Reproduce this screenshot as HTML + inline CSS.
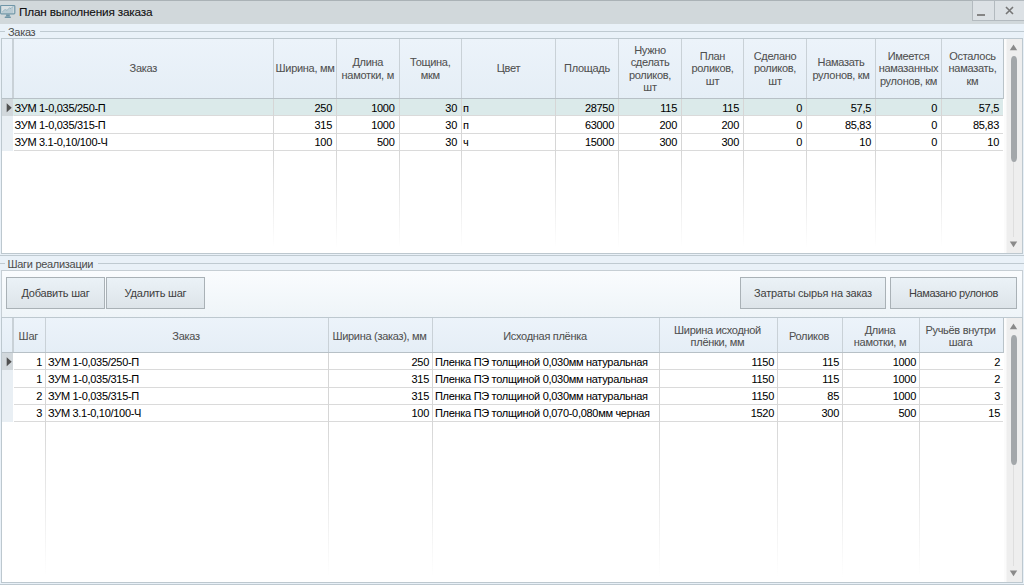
<!DOCTYPE html>
<html><head><meta charset="utf-8"><style>
html,body{margin:0;padding:0}
body{width:1024px;height:585px;overflow:hidden;position:relative;background:#e9f1f8;font-family:"Liberation Sans",sans-serif;font-size:11px}
body div,body svg{position:absolute}
.t{white-space:nowrap;letter-spacing:-0.3px}
.h{display:flex;align-items:center;justify-content:center;text-align:center;color:#505050;letter-spacing:-0.3px;white-space:nowrap;-webkit-text-stroke:0.06px #505050}
.h span{display:block}
.d{box-sizing:border-box;white-space:nowrap;overflow:hidden;color:#000000;letter-spacing:-0.3px;-webkit-text-stroke:0.05px #000000}
.btn{box-sizing:border-box;border:1px solid #a9b1b6;background:linear-gradient(#ebf2f7,#dde4e9);color:#404040;text-align:center;letter-spacing:-0.2px}
</style></head><body>

<div style="left:0px;top:0px;width:1024px;height:24px;background:#d1d8db;border-top:1px solid #aab2b6;box-sizing:border-box"></div>
<svg style="position:absolute;left:0;top:0" width="18" height="20" viewBox="0 0 18 20">
<rect x="0.6" y="5.5" width="14.2" height="8.4" rx="0.8" fill="#d9e0e3" stroke="#7096a8" stroke-width="1.2"/>
<path d="M2.2 12.6 L5 10.2 L7 11 L9.5 8.6 L11 9.2 L13.3 6.6 L13.3 12.9 L2.2 12.9 Z" fill="#b9cbd4"/>
<path d="M2.2 12 L5 9.6 L7 10.4 L9.5 8 L11 8.6 L13.3 6.2" fill="none" stroke="#8aabba" stroke-width="0.9"/>
<rect x="6.1" y="14.4" width="3.7" height="2.2" fill="#7096a8"/>
<rect x="4.7" y="16.4" width="6.2" height="1.5" rx="0.5" fill="#7096a8"/>
</svg>
<div class="t" style="left:19px;top:2px;width:200px;height:20px;line-height:20px;text-align:left;font-size:11.8px;letter-spacing:-0.2px;color:#111;-webkit-text-stroke:0.1px #111">План выполнения заказа</div>
<div style="left:972px;top:0px;width:23px;height:21px;box-sizing:border-box;border:1px solid #b3babf;background:#dce1e5"></div>
<div style="left:994px;top:0px;width:31px;height:21px;box-sizing:border-box;border:1px solid #b3babf;background:#dce1e5"></div>
<div style="left:977px;top:14px;width:8px;height:2px;background:#858585"></div>
<svg style="position:absolute;left:1005px;top:6px" width="9" height="9"><path d="M1 1 L8 8 M8 1 L1 8" stroke="#767676" stroke-width="1.6"/></svg>
<div style="left:0px;top:31px;width:5px;height:1px;background:#bfcad1"></div>
<div style="left:40px;top:31px;width:984px;height:1px;background:#bfcad1"></div>
<div class="t" style="left:8px;top:25px;width:40px;height:15px;line-height:15px;text-align:left;color:#4b4b4b">Заказ</div>
<div style="left:1px;top:38px;width:1022px;height:216px;box-sizing:border-box;border:1px solid #bdc8cf;background:#fff"></div>
<div style="left:2px;top:39px;width:1001px;height:59px;background:linear-gradient(#ecf3fa,#e5eef6)"></div>
<div style="left:2px;top:98px;width:1001px;height:1px;background:#b7c0c6"></div>
<div style="left:12.0px;top:39px;width:2px;height:59px;background:#c9d1d7"></div>
<div style="left:273px;top:39px;width:1px;height:59px;background:#c9d1d7"></div>
<div style="left:336px;top:39px;width:1px;height:59px;background:#c9d1d7"></div>
<div style="left:398.5px;top:39px;width:1px;height:59px;background:#c9d1d7"></div>
<div style="left:461px;top:39px;width:1px;height:59px;background:#c9d1d7"></div>
<div style="left:555px;top:39px;width:1px;height:59px;background:#c9d1d7"></div>
<div style="left:618px;top:39px;width:1px;height:59px;background:#c9d1d7"></div>
<div style="left:681px;top:39px;width:1px;height:59px;background:#c9d1d7"></div>
<div style="left:743px;top:39px;width:1px;height:59px;background:#c9d1d7"></div>
<div style="left:806px;top:39px;width:1px;height:59px;background:#c9d1d7"></div>
<div style="left:875px;top:39px;width:1px;height:59px;background:#c9d1d7"></div>
<div style="left:941px;top:39px;width:1px;height:59px;background:#c9d1d7"></div>
<div class="h" style="left:13.5px;top:39px;width:259.5px;height:59px;"><span style="line-height:12.3px">Заказ</span></div>
<div class="h" style="left:274px;top:39px;width:62px;height:59px;"><span style="line-height:12.3px">Ширина, мм</span></div>
<div class="h" style="left:337px;top:39px;width:61.5px;height:59px;"><span style="line-height:12.3px">Длина<br>намотки, м</span></div>
<div class="h" style="left:399.5px;top:39px;width:61.5px;height:59px;"><span style="line-height:12.3px">Тощина,<br>мкм</span></div>
<div class="h" style="left:462px;top:39px;width:93px;height:59px;"><span style="line-height:12.3px">Цвет</span></div>
<div class="h" style="left:556px;top:39px;width:62px;height:59px;"><span style="line-height:12.3px">Площадь</span></div>
<div class="h" style="left:619px;top:39px;width:62px;height:59px;"><span style="line-height:12.3px">Нужно<br>сделать<br>роликов,<br>шт</span></div>
<div class="h" style="left:682px;top:39px;width:61px;height:59px;"><span style="line-height:12.3px">План<br>роликов,<br>шт</span></div>
<div class="h" style="left:744px;top:39px;width:62px;height:59px;"><span style="line-height:12.3px">Сделано<br>роликов,<br>шт</span></div>
<div class="h" style="left:807px;top:39px;width:68px;height:59px;"><span style="line-height:12.3px">Намазать<br>рулонов, км</span></div>
<div class="h" style="left:876px;top:39px;width:65px;height:59px;"><span style="line-height:12.3px">Имеется<br>намазанных<br>рулонов, км</span></div>
<div class="h" style="left:942px;top:39px;width:61px;height:59px;"><span style="line-height:12.3px">Осталось<br>намазать,<br>км</span></div>
<div style="left:2px;top:99.0px;width:11px;height:17.3px;background:#d2d8dc"></div>
<div style="left:13px;top:99.0px;width:990px;height:17.3px;background:#dbeaea"></div>
<div style="left:13.5px;top:115.3px;width:989.5px;height:1px;background:#dadada"></div>
<div class="d" style="left:13.5px;top:99.5px;width:259.5px;height:16.3px;line-height:16.3px;text-align:left;padding-left:1px">ЗУМ 1-0,035/250-П</div>
<div class="d" style="left:274px;top:99.5px;width:62px;height:16.3px;line-height:16.3px;text-align:right;padding-right:4px">250</div>
<div class="d" style="left:337px;top:99.5px;width:61.5px;height:16.3px;line-height:16.3px;text-align:right;padding-right:4px">1000</div>
<div class="d" style="left:399.5px;top:99.5px;width:61.5px;height:16.3px;line-height:16.3px;text-align:right;padding-right:4px">30</div>
<div class="d" style="left:462px;top:99.5px;width:93px;height:16.3px;line-height:16.3px;text-align:left;padding-left:1px">п</div>
<div class="d" style="left:556px;top:99.5px;width:62px;height:16.3px;line-height:16.3px;text-align:right;padding-right:4px">28750</div>
<div class="d" style="left:619px;top:99.5px;width:62px;height:16.3px;line-height:16.3px;text-align:right;padding-right:4px">115</div>
<div class="d" style="left:682px;top:99.5px;width:61px;height:16.3px;line-height:16.3px;text-align:right;padding-right:4px">115</div>
<div class="d" style="left:744px;top:99.5px;width:62px;height:16.3px;line-height:16.3px;text-align:right;padding-right:4px">0</div>
<div class="d" style="left:807px;top:99.5px;width:68px;height:16.3px;line-height:16.3px;text-align:right;padding-right:4px">57,5</div>
<div class="d" style="left:876px;top:99.5px;width:65px;height:16.3px;line-height:16.3px;text-align:right;padding-right:4px">0</div>
<div class="d" style="left:942px;top:99.5px;width:61px;height:16.3px;line-height:16.3px;text-align:right;padding-right:4px">57,5</div>
<div style="left:2px;top:116.3px;width:11px;height:17.3px;background:#e9eff4"></div>
<div style="left:13.5px;top:132.6px;width:989.5px;height:1px;background:#dadada"></div>
<div class="d" style="left:13.5px;top:116.8px;width:259.5px;height:16.3px;line-height:16.3px;text-align:left;padding-left:1px">ЗУМ 1-0,035/315-П</div>
<div class="d" style="left:274px;top:116.8px;width:62px;height:16.3px;line-height:16.3px;text-align:right;padding-right:4px">315</div>
<div class="d" style="left:337px;top:116.8px;width:61.5px;height:16.3px;line-height:16.3px;text-align:right;padding-right:4px">1000</div>
<div class="d" style="left:399.5px;top:116.8px;width:61.5px;height:16.3px;line-height:16.3px;text-align:right;padding-right:4px">30</div>
<div class="d" style="left:462px;top:116.8px;width:93px;height:16.3px;line-height:16.3px;text-align:left;padding-left:1px">п</div>
<div class="d" style="left:556px;top:116.8px;width:62px;height:16.3px;line-height:16.3px;text-align:right;padding-right:4px">63000</div>
<div class="d" style="left:619px;top:116.8px;width:62px;height:16.3px;line-height:16.3px;text-align:right;padding-right:4px">200</div>
<div class="d" style="left:682px;top:116.8px;width:61px;height:16.3px;line-height:16.3px;text-align:right;padding-right:4px">200</div>
<div class="d" style="left:744px;top:116.8px;width:62px;height:16.3px;line-height:16.3px;text-align:right;padding-right:4px">0</div>
<div class="d" style="left:807px;top:116.8px;width:68px;height:16.3px;line-height:16.3px;text-align:right;padding-right:4px">85,83</div>
<div class="d" style="left:876px;top:116.8px;width:65px;height:16.3px;line-height:16.3px;text-align:right;padding-right:4px">0</div>
<div class="d" style="left:942px;top:116.8px;width:61px;height:16.3px;line-height:16.3px;text-align:right;padding-right:4px">85,83</div>
<div style="left:2px;top:133.6px;width:11px;height:17.3px;background:#e9eff4"></div>
<div style="left:13.5px;top:149.9px;width:989.5px;height:1px;background:#dadada"></div>
<div class="d" style="left:13.5px;top:134.1px;width:259.5px;height:16.3px;line-height:16.3px;text-align:left;padding-left:1px">ЗУМ 3.1-0,10/100-Ч</div>
<div class="d" style="left:274px;top:134.1px;width:62px;height:16.3px;line-height:16.3px;text-align:right;padding-right:4px">100</div>
<div class="d" style="left:337px;top:134.1px;width:61.5px;height:16.3px;line-height:16.3px;text-align:right;padding-right:4px">500</div>
<div class="d" style="left:399.5px;top:134.1px;width:61.5px;height:16.3px;line-height:16.3px;text-align:right;padding-right:4px">30</div>
<div class="d" style="left:462px;top:134.1px;width:93px;height:16.3px;line-height:16.3px;text-align:left;padding-left:1px">ч</div>
<div class="d" style="left:556px;top:134.1px;width:62px;height:16.3px;line-height:16.3px;text-align:right;padding-right:4px">15000</div>
<div class="d" style="left:619px;top:134.1px;width:62px;height:16.3px;line-height:16.3px;text-align:right;padding-right:4px">300</div>
<div class="d" style="left:682px;top:134.1px;width:61px;height:16.3px;line-height:16.3px;text-align:right;padding-right:4px">300</div>
<div class="d" style="left:744px;top:134.1px;width:62px;height:16.3px;line-height:16.3px;text-align:right;padding-right:4px">0</div>
<div class="d" style="left:807px;top:134.1px;width:68px;height:16.3px;line-height:16.3px;text-align:right;padding-right:4px">10</div>
<div class="d" style="left:876px;top:134.1px;width:65px;height:16.3px;line-height:16.3px;text-align:right;padding-right:4px">0</div>
<div class="d" style="left:942px;top:134.1px;width:61px;height:16.3px;line-height:16.3px;text-align:right;padding-right:4px">10</div>
<div style="left:273px;top:99px;width:1px;height:51.900000000000006px;background:#d6d6d6"></div>
<div style="left:273px;top:150.9px;width:1px;height:97.1px;background:linear-gradient(#d6d6d6,rgba(214,214,214,0))"></div>
<div style="left:336px;top:99px;width:1px;height:51.900000000000006px;background:#d6d6d6"></div>
<div style="left:336px;top:150.9px;width:1px;height:97.1px;background:linear-gradient(#d6d6d6,rgba(214,214,214,0))"></div>
<div style="left:398.5px;top:99px;width:1px;height:51.900000000000006px;background:#d6d6d6"></div>
<div style="left:398.5px;top:150.9px;width:1px;height:97.1px;background:linear-gradient(#d6d6d6,rgba(214,214,214,0))"></div>
<div style="left:461px;top:99px;width:1px;height:51.900000000000006px;background:#d6d6d6"></div>
<div style="left:461px;top:150.9px;width:1px;height:97.1px;background:linear-gradient(#d6d6d6,rgba(214,214,214,0))"></div>
<div style="left:555px;top:99px;width:1px;height:51.900000000000006px;background:#d6d6d6"></div>
<div style="left:555px;top:150.9px;width:1px;height:97.1px;background:linear-gradient(#d6d6d6,rgba(214,214,214,0))"></div>
<div style="left:618px;top:99px;width:1px;height:51.900000000000006px;background:#d6d6d6"></div>
<div style="left:618px;top:150.9px;width:1px;height:97.1px;background:linear-gradient(#d6d6d6,rgba(214,214,214,0))"></div>
<div style="left:681px;top:99px;width:1px;height:51.900000000000006px;background:#d6d6d6"></div>
<div style="left:681px;top:150.9px;width:1px;height:97.1px;background:linear-gradient(#d6d6d6,rgba(214,214,214,0))"></div>
<div style="left:743px;top:99px;width:1px;height:51.900000000000006px;background:#d6d6d6"></div>
<div style="left:743px;top:150.9px;width:1px;height:97.1px;background:linear-gradient(#d6d6d6,rgba(214,214,214,0))"></div>
<div style="left:806px;top:99px;width:1px;height:51.900000000000006px;background:#d6d6d6"></div>
<div style="left:806px;top:150.9px;width:1px;height:97.1px;background:linear-gradient(#d6d6d6,rgba(214,214,214,0))"></div>
<div style="left:875px;top:99px;width:1px;height:51.900000000000006px;background:#d6d6d6"></div>
<div style="left:875px;top:150.9px;width:1px;height:97.1px;background:linear-gradient(#d6d6d6,rgba(214,214,214,0))"></div>
<div style="left:941px;top:99px;width:1px;height:51.900000000000006px;background:#d6d6d6"></div>
<div style="left:941px;top:150.9px;width:1px;height:97.1px;background:linear-gradient(#d6d6d6,rgba(214,214,214,0))"></div>
<svg style="position:absolute;left:5.5px;top:103.15px" width="7" height="10"><path d="M0.7 0.3 L5.7 4.8 L0.7 9.3 Z" fill="#505050"/></svg>
<div style="left:1004px;top:39px;width:18px;height:214px;background:linear-gradient(90deg,#fbfbfb 0,#fbfbfb 2px,#eeeeee 3px)"></div>
<div style="left:1003px;top:39px;width:1px;height:60px;background:#b9c3c9"></div>
<svg style="position:absolute;left:1009px;top:44px" width="10" height="7"><path d="M0.8 6.3 L4.5 0.5 L8.2 6.3 Z" fill="#8a8a8a"/></svg>
<div style="left:1010.5px;top:56px;width:6.4px;height:106.30000000000001px;background:#a3a7aa;border-radius:3.2px/5px"></div>
<div style="left:1013.4px;top:162.3px;width:1px;height:74.69999999999999px;background:#dedede"></div>
<svg style="position:absolute;left:1009px;top:241px" width="10" height="7"><path d="M0.8 0.5 L4.5 6.3 L8.2 0.5 Z" fill="#8a8a8a"/></svg>
<div style="left:0px;top:255px;width:1024px;height:1px;background:#bfcad1"></div>
<div style="left:0px;top:263px;width:5px;height:1px;background:#bfcad1"></div>
<div style="left:98px;top:263px;width:926px;height:1px;background:#bfcad1"></div>
<div class="t" style="left:7.5px;top:257px;width:100px;height:15px;line-height:15px;text-align:left;color:#4b4b4b">Шаги реализации</div>
<div style="left:1px;top:270px;width:1022px;height:48px;box-sizing:border-box;border:1px solid #c6ced4;border-bottom:none;background:linear-gradient(#fafcfe,#eef4f8)"></div>
<div class="btn" style="left:6px;top:277px;width:99px;height:32px;line-height:31px;letter-spacing:-0.2px">Добавить шаг</div>
<div class="btn" style="left:106px;top:277px;width:99px;height:32px;line-height:31px;letter-spacing:-0.2px">Удалить шаг</div>
<div class="btn" style="left:740px;top:277px;width:146px;height:32px;line-height:31px;letter-spacing:-0.2px">Затраты сырья на заказ</div>
<div class="btn" style="left:890px;top:277px;width:127px;height:32px;line-height:31px;letter-spacing:-0.45px">Намазано рулонов</div>
<div style="left:1px;top:317px;width:1022px;height:266px;box-sizing:border-box;border:1px solid #bdc8cf;background:#fff"></div>
<div style="left:2px;top:318px;width:1001px;height:34px;background:linear-gradient(#ecf3fa,#e5eef6)"></div>
<div style="left:2px;top:352px;width:1001px;height:1px;background:#b7c0c6"></div>
<div style="left:12.0px;top:318px;width:2px;height:34px;background:#c9d1d7"></div>
<div style="left:45px;top:318px;width:1px;height:34px;background:#c9d1d7"></div>
<div style="left:328px;top:318px;width:1px;height:34px;background:#c9d1d7"></div>
<div style="left:432px;top:318px;width:1px;height:34px;background:#c9d1d7"></div>
<div style="left:659px;top:318px;width:1px;height:34px;background:#c9d1d7"></div>
<div style="left:777px;top:318px;width:1px;height:34px;background:#c9d1d7"></div>
<div style="left:842px;top:318px;width:1px;height:34px;background:#c9d1d7"></div>
<div style="left:919px;top:318px;width:1px;height:34px;background:#c9d1d7"></div>
<div class="h" style="left:12.5px;top:319px;width:31.5px;height:34px;"><span style="line-height:12.3px">Шаг</span></div>
<div class="h" style="left:45px;top:319px;width:282px;height:34px;"><span style="line-height:12.3px">Заказ</span></div>
<div class="h" style="left:328px;top:319px;width:103px;height:34px;"><span style="line-height:12.3px">Ширина (заказ), мм</span></div>
<div class="h" style="left:432px;top:319px;width:226px;height:34px;"><span style="line-height:12.3px">Исходная плёнка</span></div>
<div class="h" style="left:659px;top:319px;width:117px;height:34px;"><span style="line-height:12.3px">Ширина исходной<br>плёнки, мм</span></div>
<div class="h" style="left:777px;top:319px;width:64px;height:34px;"><span style="line-height:12.3px">Роликов</span></div>
<div class="h" style="left:842px;top:319px;width:76px;height:34px;"><span style="line-height:12.3px">Длина<br>намотки, м</span></div>
<div class="h" style="left:919px;top:319px;width:83px;height:34px;"><span style="line-height:12.3px">Ручьёв внутри<br>шага</span></div>
<div style="left:2px;top:353.0px;width:11px;height:17.3px;background:#d2d8dc"></div>
<div style="left:13.5px;top:369.3px;width:989.5px;height:1px;background:#dadada"></div>
<div class="d" style="left:13.5px;top:353.5px;width:31.5px;height:16.3px;line-height:16.3px;text-align:right;padding-right:3px">1</div>
<div class="d" style="left:46px;top:353.5px;width:282px;height:16.3px;line-height:16.3px;text-align:left;padding-left:2px">ЗУМ 1-0,035/250-П</div>
<div class="d" style="left:329px;top:353.5px;width:103px;height:16.3px;line-height:16.3px;text-align:right;padding-right:3px">250</div>
<div class="d" style="left:433px;top:353.5px;width:226px;height:16.3px;line-height:16.3px;text-align:left;padding-left:2px">Пленка ПЭ толщиной 0,030мм натуральная</div>
<div class="d" style="left:660px;top:353.5px;width:117px;height:16.3px;line-height:16.3px;text-align:right;padding-right:3px">1150</div>
<div class="d" style="left:778px;top:353.5px;width:64px;height:16.3px;line-height:16.3px;text-align:right;padding-right:3px">115</div>
<div class="d" style="left:843px;top:353.5px;width:76px;height:16.3px;line-height:16.3px;text-align:right;padding-right:3px">1000</div>
<div class="d" style="left:920px;top:353.5px;width:83px;height:16.3px;line-height:16.3px;text-align:right;padding-right:3px">2</div>
<div style="left:2px;top:370.3px;width:11px;height:17.3px;background:#e9eff4"></div>
<div style="left:13.5px;top:386.6px;width:989.5px;height:1px;background:#dadada"></div>
<div class="d" style="left:13.5px;top:370.8px;width:31.5px;height:16.3px;line-height:16.3px;text-align:right;padding-right:3px">1</div>
<div class="d" style="left:46px;top:370.8px;width:282px;height:16.3px;line-height:16.3px;text-align:left;padding-left:2px">ЗУМ 1-0,035/315-П</div>
<div class="d" style="left:329px;top:370.8px;width:103px;height:16.3px;line-height:16.3px;text-align:right;padding-right:3px">315</div>
<div class="d" style="left:433px;top:370.8px;width:226px;height:16.3px;line-height:16.3px;text-align:left;padding-left:2px">Пленка ПЭ толщиной 0,030мм натуральная</div>
<div class="d" style="left:660px;top:370.8px;width:117px;height:16.3px;line-height:16.3px;text-align:right;padding-right:3px">1150</div>
<div class="d" style="left:778px;top:370.8px;width:64px;height:16.3px;line-height:16.3px;text-align:right;padding-right:3px">115</div>
<div class="d" style="left:843px;top:370.8px;width:76px;height:16.3px;line-height:16.3px;text-align:right;padding-right:3px">1000</div>
<div class="d" style="left:920px;top:370.8px;width:83px;height:16.3px;line-height:16.3px;text-align:right;padding-right:3px">2</div>
<div style="left:2px;top:387.6px;width:11px;height:17.3px;background:#e9eff4"></div>
<div style="left:13.5px;top:403.9px;width:989.5px;height:1px;background:#dadada"></div>
<div class="d" style="left:13.5px;top:388.1px;width:31.5px;height:16.3px;line-height:16.3px;text-align:right;padding-right:3px">2</div>
<div class="d" style="left:46px;top:388.1px;width:282px;height:16.3px;line-height:16.3px;text-align:left;padding-left:2px">ЗУМ 1-0,035/315-П</div>
<div class="d" style="left:329px;top:388.1px;width:103px;height:16.3px;line-height:16.3px;text-align:right;padding-right:3px">315</div>
<div class="d" style="left:433px;top:388.1px;width:226px;height:16.3px;line-height:16.3px;text-align:left;padding-left:2px">Пленка ПЭ толщиной 0,030мм натуральная</div>
<div class="d" style="left:660px;top:388.1px;width:117px;height:16.3px;line-height:16.3px;text-align:right;padding-right:3px">1150</div>
<div class="d" style="left:778px;top:388.1px;width:64px;height:16.3px;line-height:16.3px;text-align:right;padding-right:3px">85</div>
<div class="d" style="left:843px;top:388.1px;width:76px;height:16.3px;line-height:16.3px;text-align:right;padding-right:3px">1000</div>
<div class="d" style="left:920px;top:388.1px;width:83px;height:16.3px;line-height:16.3px;text-align:right;padding-right:3px">3</div>
<div style="left:2px;top:404.9px;width:11px;height:17.3px;background:#e9eff4"></div>
<div style="left:13.5px;top:421.2px;width:989.5px;height:1px;background:#dadada"></div>
<div class="d" style="left:13.5px;top:405.4px;width:31.5px;height:16.3px;line-height:16.3px;text-align:right;padding-right:3px">3</div>
<div class="d" style="left:46px;top:405.4px;width:282px;height:16.3px;line-height:16.3px;text-align:left;padding-left:2px">ЗУМ 3.1-0,10/100-Ч</div>
<div class="d" style="left:329px;top:405.4px;width:103px;height:16.3px;line-height:16.3px;text-align:right;padding-right:3px">100</div>
<div class="d" style="left:433px;top:405.4px;width:226px;height:16.3px;line-height:16.3px;text-align:left;padding-left:2px">Пленка ПЭ толщиной 0,070-0,080мм черная</div>
<div class="d" style="left:660px;top:405.4px;width:117px;height:16.3px;line-height:16.3px;text-align:right;padding-right:3px">1520</div>
<div class="d" style="left:778px;top:405.4px;width:64px;height:16.3px;line-height:16.3px;text-align:right;padding-right:3px">300</div>
<div class="d" style="left:843px;top:405.4px;width:76px;height:16.3px;line-height:16.3px;text-align:right;padding-right:3px">500</div>
<div class="d" style="left:920px;top:405.4px;width:83px;height:16.3px;line-height:16.3px;text-align:right;padding-right:3px">15</div>
<div style="left:45px;top:353px;width:1px;height:69.19999999999999px;background:#d6d6d6"></div>
<div style="left:45px;top:422.2px;width:1px;height:154.8px;background:linear-gradient(#d6d6d6,rgba(214,214,214,0))"></div>
<div style="left:328px;top:353px;width:1px;height:69.19999999999999px;background:#d6d6d6"></div>
<div style="left:328px;top:422.2px;width:1px;height:154.8px;background:linear-gradient(#d6d6d6,rgba(214,214,214,0))"></div>
<div style="left:432px;top:353px;width:1px;height:69.19999999999999px;background:#d6d6d6"></div>
<div style="left:432px;top:422.2px;width:1px;height:154.8px;background:linear-gradient(#d6d6d6,rgba(214,214,214,0))"></div>
<div style="left:659px;top:353px;width:1px;height:69.19999999999999px;background:#d6d6d6"></div>
<div style="left:659px;top:422.2px;width:1px;height:154.8px;background:linear-gradient(#d6d6d6,rgba(214,214,214,0))"></div>
<div style="left:777px;top:353px;width:1px;height:69.19999999999999px;background:#d6d6d6"></div>
<div style="left:777px;top:422.2px;width:1px;height:154.8px;background:linear-gradient(#d6d6d6,rgba(214,214,214,0))"></div>
<div style="left:842px;top:353px;width:1px;height:69.19999999999999px;background:#d6d6d6"></div>
<div style="left:842px;top:422.2px;width:1px;height:154.8px;background:linear-gradient(#d6d6d6,rgba(214,214,214,0))"></div>
<div style="left:919px;top:353px;width:1px;height:69.19999999999999px;background:#d6d6d6"></div>
<div style="left:919px;top:422.2px;width:1px;height:154.8px;background:linear-gradient(#d6d6d6,rgba(214,214,214,0))"></div>
<svg style="position:absolute;left:5.5px;top:357.15px" width="7" height="10"><path d="M0.7 0.3 L5.7 4.8 L0.7 9.3 Z" fill="#505050"/></svg>
<div style="left:1004px;top:318px;width:18px;height:264px;background:linear-gradient(90deg,#fbfbfb 0,#fbfbfb 2px,#eeeeee 3px)"></div>
<div style="left:1003px;top:318px;width:1px;height:35px;background:#b9c3c9"></div>
<svg style="position:absolute;left:1009px;top:322.5px" width="10" height="7"><path d="M0.8 6.3 L4.5 0.5 L8.2 6.3 Z" fill="#8a8a8a"/></svg>
<div style="left:1010.5px;top:335px;width:6.4px;height:129.60000000000002px;background:#a3a7aa;border-radius:3.2px/5px"></div>
<div style="left:1013.4px;top:464.6px;width:1px;height:101.39999999999998px;background:#dedede"></div>
<svg style="position:absolute;left:1009px;top:570px" width="10" height="7"><path d="M0.8 0.5 L4.5 6.3 L8.2 0.5 Z" fill="#8a8a8a"/></svg>
<div style="left:0px;top:584px;width:1024px;height:1px;background:#bfcad1"></div>
</body></html>
